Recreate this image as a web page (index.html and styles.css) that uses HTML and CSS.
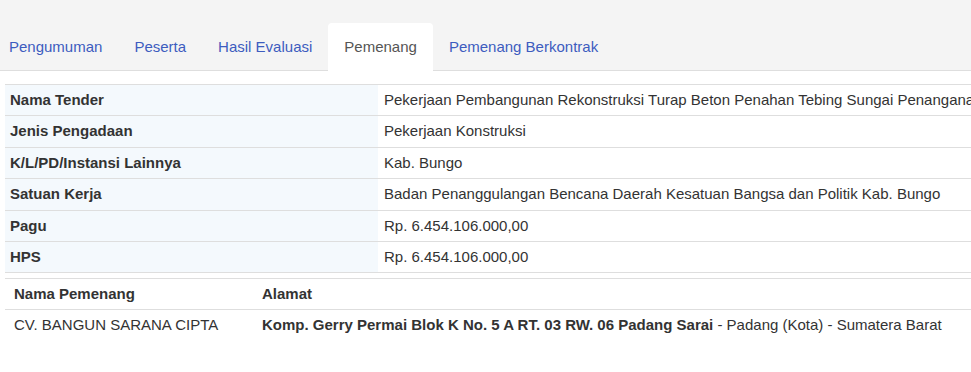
FILE: index.html
```html
<!DOCTYPE html>
<html>
<head>
<meta charset="utf-8" />
<title>Pemenang</title>
<link rel="stylesheet" href="styles.css">
</head>
<body>
<div class="tabbar">
	<ul class="tabs">
		<li><a href="#">Pengumuman</a></li>
		<li><a href="#">Peserta</a></li>
		<li><a href="#">Hasil Evaluasi</a></li>
		<li class="active"><a href="#">Pemenang</a></li>
		<li><a href="#">Pemenang Berkontrak</a></li>
	</ul>
</div>
<div class="content">
	<table class="info">
		<tr><th>Nama Tender</th><td>Pekerjaan Pembangunan Rekonstruksi Turap Beton Penahan Tebing Sungai Penanganan Pasca Bencana Kab. Bungo</td></tr>
		<tr><th>Jenis Pengadaan</th><td>Pekerjaan Konstruksi</td></tr>
		<tr><th>K/L/PD/Instansi Lainnya</th><td>Kab. Bungo</td></tr>
		<tr><th>Satuan Kerja</th><td>Badan Penanggulangan Bencana Daerah Kesatuan Bangsa dan Politik Kab. Bungo</td></tr>
		<tr><th>Pagu</th><td>Rp. 6.454.106.000,00</td></tr>
		<tr><th>HPS</th><td>Rp. 6.454.106.000,00</td></tr>
		<tr>
			<td colspan="2" class="holder">
				<table class="winner">
					<tr><th class="name">Nama Pemenang</th><th>Alamat</th></tr>
					<tr><td class="name">CV. BANGUN SARANA CIPTA</td><td><b>Komp. Gerry Permai Blok K No. 5 A RT. 03 RW. 06 Padang Sarai</b> - Padang (Kota) - Sumatera Barat</td></tr>
				</table>
			</td>
		</tr>
	</table>
</div>
</body>
</html>
```

FILE: styles.css
```css
body,ul{margin:0;padding:0;}
body{font-family:"Liberation Sans", Arial, sans-serif;font-size:15px;color:#333;background:#fff;overflow:hidden;}

.tabbar{background:#f4f4f4;border-bottom:1px solid #dedede;padding-top:23px;height:47px;}
.tabs{display:flex;list-style:none;margin-left:-7px;}
.tabs li{height:47px;}
.tabs a{display:block;padding:13px 16px;line-height:21px;color:#3d5cbf;text-decoration:none;white-space:nowrap;}
.tabs .active{background:#fff;border-radius:4px 4px 0 0;height:48px;}
.tabs .active a{color:#555;}

.content{padding:13px 0 0 5px;}
.info{border-collapse:collapse;width:1200px;}
.info th,.info td{border-top:1px solid #dedede;padding:5px 6px;line-height:20.4px;text-align:left;vertical-align:top;white-space:nowrap;}
.info th{width:362px;padding-left:5px;background:#f4f9fd;font-weight:bold;}
.info td.holder{padding:5px 0 0 0;}

.winner{border-collapse:collapse;width:100%;}
.winner th,.winner td{border-top:1px solid #dedede;padding:5px 9px;line-height:20px;background:#fff;width:auto;}
.winner .name{width:230px;}
.winner tr:first-child th{border-top:1px solid #dedede;}
```
